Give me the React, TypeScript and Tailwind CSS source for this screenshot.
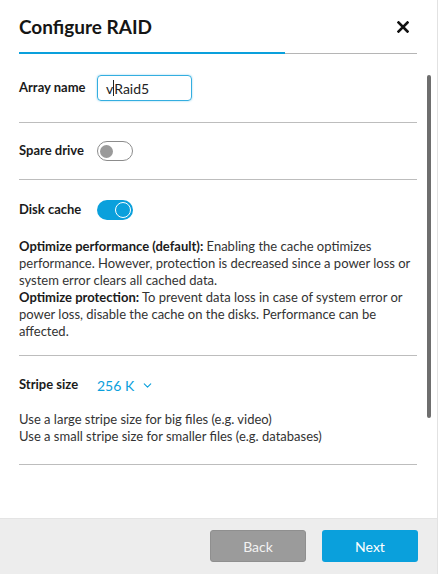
import { ChevronDown } from 'lucide-react';

const BLUE = '#0aa0dc';

function Toggle({ on }: { on: boolean }) {
  if (on) {
    return (
      <div className="w-[36px] h-[20px] rounded-full bg-[#0aa0dc] flex items-center justify-end pr-[2px]">
        <div className="w-[16px] h-[16px] rounded-full border-[1.5px] border-white bg-[#0aa0dc]" />
      </div>
    );
  }
  return (
    <div className="w-[36px] h-[20px] rounded-full border-[1.5px] border-[#8c8c8c] bg-white flex items-center pl-[2px]">
      <div className="w-[13px] h-[13px] rounded-full bg-[#9a9a9a]" />
    </div>
  );
}

function Row({ label, children }: { label: string, children: React.ReactNode }) {
  return (
    <div className="flex items-center">
      <div className="w-[78px] text-[13px] font-bold text-[#1b1b1b]">{label}</div>
      {children}
    </div>
  );
}

export default function App() {
  return (
    <div
      className="w-[438px] h-[574px] bg-white flex flex-col border-r border-[#e2e2e2] text-[#333]"
      style={{ fontFamily: 'Lato, "Open Sans", sans-serif' }}
    >
      {/* header */}
      <div className="pl-[19px] pr-[20px] pt-[13px]">
        <div className="flex items-center justify-between h-[28px]">
          <h1 className="text-[19px] font-bold text-[#151515] leading-[28px]">Configure RAID</h1>
          <svg width="12" height="12" viewBox="0 0 12 12" className="mr-[8px]">
            <path d="M1.5 1.5 L10.5 10.5 M10.5 1.5 L1.5 10.5" stroke="#111" strokeWidth="2.6" strokeLinecap="square" />
          </svg>
        </div>
        <div className="mt-[11px] flex items-center h-[2px]">
          <div className="w-[266px] h-[2px] bg-[#0aa0dc]" />
          <div className="flex-1 h-px bg-[#b5b5b5]" />
        </div>
      </div>

      {/* body */}
      <div className="relative flex-1 overflow-hidden">
        <div className="pl-[19px] pr-[20px]">
          <div className="pt-[21px] pb-[21px] border-b border-[#bdbdbd]">
            <Row label="Array name">
              <div className="w-[95px] h-[26px] rounded-[4px] border border-[#34aee0] shadow-[0_0_2px_rgba(52,174,224,0.6)] flex items-center pl-[8px] text-[14px] text-[#222]">
                v<span className="inline-block w-px h-[16px] bg-[#222]" />Raid5
              </div>
            </Row>
          </div>

          <div className="pt-[18px] pb-[18px] border-b border-[#bdbdbd]">
            <Row label="Spare drive">
              <Toggle on={false} />
            </Row>
          </div>

          <div className="pt-[20px] pb-[15px] border-b border-[#bdbdbd]">
            <Row label="Disk cache">
              <Toggle on={true} />
            </Row>
            <p className="mt-[18px] text-[13px] leading-[17px] text-[#333]">
              <span className="font-bold text-[#1b1b1b]">Optimize performance (default):</span> Enabling the cache optimizes performance. However, protection is decreased since a power loss or system error clears all cached data.
              <br />
              <span className="font-bold text-[#1b1b1b]">Optimize protection:</span> To prevent data loss in case of system error or power loss, disable the cache on the disks. Performance can be affected.
            </p>
          </div>

          <div className="pt-[19px] pb-[19px] border-b border-[#bdbdbd]">
            <Row label="Stripe size">
              <div className="flex items-center h-[20px] text-[14px]" style={{ color: BLUE }}>
                <span>256 K</span>
                <ChevronDown size={13} strokeWidth={2} className="ml-[7px]" />
              </div>
            </Row>
            <p className="mt-[16px] text-[13px] leading-[17px] text-[#333]">
              Use a large stripe size for big files (e.g. video)
              <br />
              Use a small stripe size for smaller files (e.g. databases)
            </p>
          </div>
        </div>

        {/* scrollbar thumb */}
        <div className="absolute left-[427px] top-[21px] w-[4px] h-[343px] rounded-[2px] bg-[#6e6e6e]" />
      </div>

      {/* footer */}
      <div className="h-[56px] bg-[#ededed] border-t border-[#e4e4e4] flex justify-end items-start pt-[11px] pr-[19px] gap-[16px]">
        <button className="w-[96px] h-[32px] rounded-[3px] bg-[#9b9b9b] border border-[#8f8f8f] text-[14px] text-[#f2f2f2]">
          Back
        </button>
        <button className="w-[96px] h-[32px] rounded-[3px] bg-[#0aa0dc] text-[14px] text-white">
          Next
        </button>
      </div>
    </div>
  );
}
